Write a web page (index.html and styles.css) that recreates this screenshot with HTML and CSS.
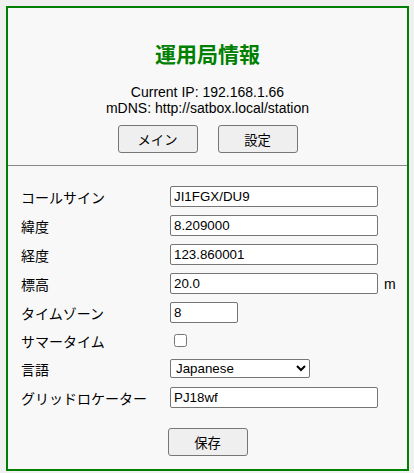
FILE: index.html
```html
<!DOCTYPE html>
<html lang="ja">

<head>
  <meta charset="UTF-8">
  <meta name="viewport" content="width=device-width, initial-scale=1.0">
  <title>運用局情報</title>
  <link rel="stylesheet" href="styles.css">
</head>

<body>
  <div class="panel">
    <header class="panel__head">
      <h2 class="panel__title">運用局情報</h2>
      <p class="panel__info">Current IP: 192.168.1.66<br>mDNS: http://satbox.local/station</p>
      <nav class="panel__nav">
        <button class="btn" type="button">メイン</button>
        <button class="btn" type="button">設定</button>
      </nav>
    </header>
    <form class="settings">
      <div class="settings__grid">
        <label class="settings__label" for="callsign">コールサイン</label>
        <div class="settings__field"><input class="input" id="callsign" type="text" value="JI1FGX/DU9"></div>

        <label class="settings__label" for="lat">緯度</label>
        <div class="settings__field"><input class="input" id="lat" type="text" value="8.209000"></div>

        <label class="settings__label" for="lon">経度</label>
        <div class="settings__field"><input class="input" id="lon" type="text" value="123.860001"></div>

        <label class="settings__label" for="alt">標高</label>
        <div class="settings__field"><input class="input" id="alt" type="text" value="20.0"><span class="settings__unit">m</span></div>

        <label class="settings__label" for="tz">タイムゾーン</label>
        <div class="settings__field"><input class="input input--short" id="tz" type="text" value="8"></div>

        <label class="settings__label settings__label--check" for="dst">サマータイム</label>
        <div class="settings__field settings__field--check"><input class="check" id="dst" type="checkbox"></div>

        <label class="settings__label" for="lang">言語</label>
        <div class="settings__field">
          <select class="select" id="lang">
            <option>Japanese</option>
            <option>English</option>
          </select>
        </div>

        <label class="settings__label" for="grid">グリッドロケーター</label>
        <div class="settings__field"><input class="input" id="grid" type="text" value="PJ18wf"></div>
      </div>
      <div class="settings__actions">
        <button class="btn" type="submit">保存</button>
      </div>
    </form>
  </div>
</body>

</html>
```

FILE: styles.css
```css
html {
  font-size: 14px;
}

body {
  background-color: #f0f0f0;
  margin: 6px 5px 2px 6px;
}

* {
  font-family: "Liberation Sans", Arial, "Noto Sans CJK JP", sans-serif;
}

.panel {
  background-color: #f8f8f8;
  border: 2px solid #008000;
  color: #000;
}

.panel__head {
  border-bottom: 1px solid #888;
  padding: 30px 0 12px;
  text-align: center;
}

.panel__title {
  color: #008000;
  font-family: "Noto Sans CJK JP", sans-serif;
  font-size: 21px;
  font-weight: bold;
  line-height: 30px;
  margin: 0;
}

.panel__info {
  font-size: 14px;
  line-height: 16px;
  margin: 16px 0 0;
}

.panel__nav {
  display: flex;
  gap: 20px;
  justify-content: center;
  margin-top: 9px;
}

.btn {
  background-color: #efefef;
  border: 1px solid #767676;
  border-radius: 3px;
  color: #000;
  cursor: pointer;
  font-size: 13.33px;
  height: 28px;
  padding: 0;
  width: 80px;
}

.btn:hover {
  background-color: #e5e5e5;
}

.settings {
  padding: 16px 0 13px 13px;
}

.settings__grid {
  align-items: center;
  display: grid;
  grid-auto-rows: 29px;
  grid-template-columns: 149px 1fr;
  grid-template-rows: repeat(5, 29px) 27px;
}

.settings__label {
  font-size: 14px;
}

.settings__field {
  align-items: center;
  display: flex;
}

.settings__unit {
  font-size: 14px;
  margin-left: 6px;
}

.input {
  background-color: #fff;
  border: 1px solid #767676;
  border-radius: 2px;
  box-sizing: border-box;
  font-size: 13.33px;
  height: 21px;
  outline: none;
  padding: 1px 3px;
  width: 208px;
}

.input--short {
  width: 68px;
}

.check {
  height: 13px;
  margin: 0 0 0 4px;
  width: 13px;
}

.select {
  background-color: #fff;
  border: 1px solid #767676;
  border-radius: 2px;
  box-sizing: border-box;
  font-size: 13.33px;
  height: 19px;
  padding: 0 0 0 1px;
  width: 140px;
}

.settings__actions {
  display: flex;
  justify-content: center;
  margin: 16px 0 0 -13px;
}
```
